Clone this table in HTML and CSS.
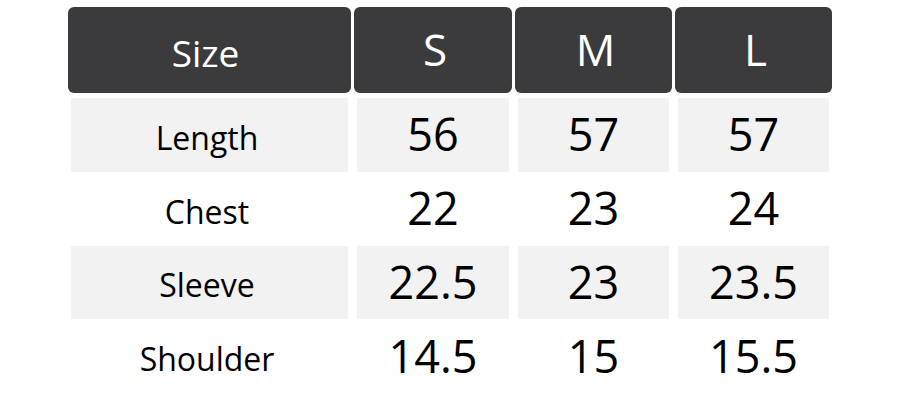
FILE: index.html
```html
<!DOCTYPE html>
<html>
<head>
<meta charset="utf-8">
<link rel="stylesheet" href="styles.css">
</head>
<body>
<div class="chart">
  <div class="hd hd-label">Size</div>
  <div class="hd">S</div>
  <div class="hd">M</div>
  <div class="hd">L</div>

  <div class="cell label shade">Length</div>
  <div class="cell num shade">56</div>
  <div class="cell num shade">57</div>
  <div class="cell num shade">57</div>

  <div class="cell label">Chest</div>
  <div class="cell num">22</div>
  <div class="cell num">23</div>
  <div class="cell num">24</div>

  <div class="cell label shade">Sleeve</div>
  <div class="cell num shade">22.5</div>
  <div class="cell num shade">23</div>
  <div class="cell num shade">23.5</div>

  <div class="cell label">Shoulder</div>
  <div class="cell num">14.5</div>
  <div class="cell num">15</div>
  <div class="cell num">15.5</div>
</div>
</body>
</html>
```

FILE: styles.css
```css
html, body {
  margin: 0;
  padding: 0;
  background: #ffffff;
}
body {
  font-family: "Open Sans", "Noto Sans", "DejaVu Sans", sans-serif;
  color: #000;
}
.chart {
  display: grid;
  grid-template-columns: 283px 158px 157px 157px;
  grid-template-rows: 91px repeat(4, 73.75px);
  column-gap: 3px;
  padding: 7px 0 0 68px;
}
.hd {
  background: #3b3b3d;
  color: #ffffff;
  border-radius: 6px;
  margin-bottom: 5px;
  display: flex;
  align-items: center;
  justify-content: center;
  font-size: 44px;
  line-height: 1;
  padding-bottom: 2px;
  padding-left: 4px;
}
.hd-label {
  font-size: 37px;
  padding-top: 4px;
  padding-bottom: 0;
  padding-left: 0;
  padding-right: 8px;
}
.cell {
  margin: 0 3px;
  display: flex;
  align-items: center;
  justify-content: center;
  line-height: 1;
}
.shade {
  background: #f2f2f2;
}
.label {
  font-size: 32px;
  padding-top: 6px;
  padding-right: 5px;
}
.num {
  font-size: 45px;
  padding-bottom: 2px;
}
```
